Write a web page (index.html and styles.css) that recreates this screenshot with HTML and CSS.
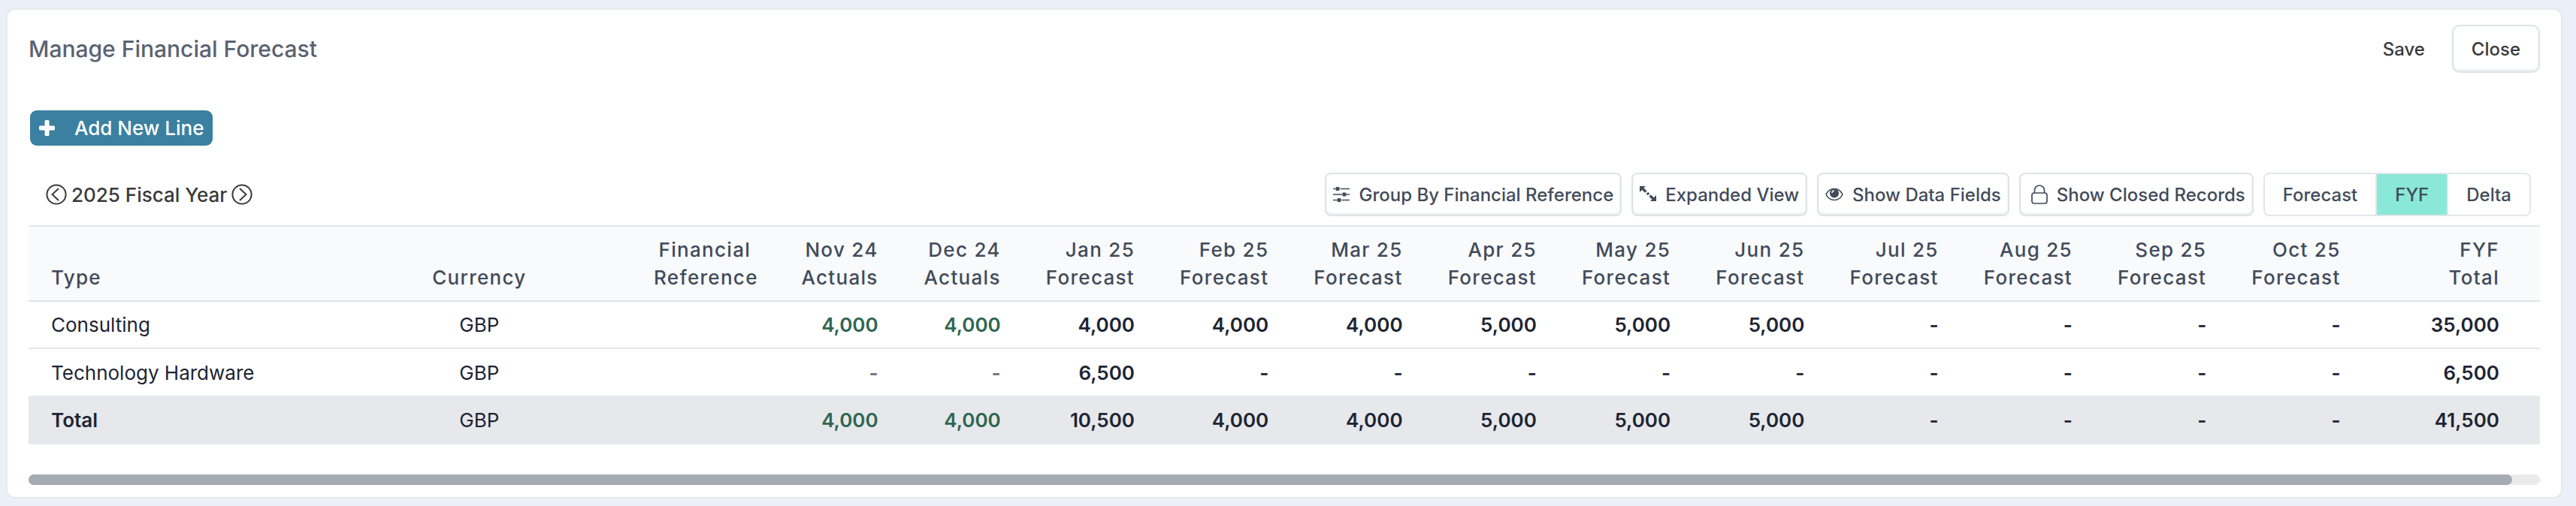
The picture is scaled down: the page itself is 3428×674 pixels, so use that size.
FILE: index.html
```
<!DOCTYPE html>
<html lang="en">

<head>
    <meta charset="UTF-8">
    <meta name="viewport" content="width=device-width, initial-scale=1.0">
    <title>Manage Financial Forecast</title>
    <link rel="stylesheet" href="styles.css">
</head>

<body>
    <main class="card">
        <header class="card-header">
            <h1>Manage Financial Forecast</h1>
            <div class="actions">
                <button type="button" class="save">Save</button>
                <button type="button" class="close">Close</button>
            </div>
        </header>

        <button type="button" class="add">
            <svg width="21" height="22" viewBox="0 0 21 22" fill="#fff">
                <rect x="7.5" y="0" width="6" height="21" rx="1.5" />
                <rect x="0" y="7.5" width="21" height="6" rx="1.5" />
            </svg>
            Add New Line
        </button>

        <div class="toolbar">
            <div class="year">
                <button type="button" class="arrow" aria-label="Previous year">
                    <svg width="28" height="28" viewBox="0 0 28 28">
                        <circle cx="14" cy="14" r="12.6" />
                        <path d="M17 6l-8.500 8 8.500 8" />
                    </svg>
                </button>
                <span>2025 Fiscal Year</span>
                <button type="button" class="arrow" aria-label="Next year">
                    <svg width="28" height="28" viewBox="0 0 28 28">
                        <circle cx="14" cy="14" r="12.6" />
                        <path d="M11 6l8.500 8-8.500 8" />
                    </svg>
                </button>
            </div>
            <div class="options">
                <button type="button" class="tool">
                    <svg width="22" height="20" viewBox="0 0 22 20" fill="#414b5a">
                        <path d="M0 1.700h3v1.600H0zM9.500 1.700H22v1.600H9.500zM0 9.200h12v1.600H0zM18 9.200h4v1.600h-4zM0 16.700h5v1.600H0zM11.500 16.700H22v1.600H11.500z" />
                        <rect x="3.5" y="0" width="5" height="5" rx="1" />
                        <rect x="12.500" y="7.500" width="5" height="5" rx="1" />
                        <rect x="5.500" y="15" width="5" height="5" rx="1" />
                    </svg>
                    Group By Financial Reference
                </button>
                <button type="button" class="tool">
                    <svg width="22" height="24" viewBox="0 0 22 24" fill="#414b5a">
                        <path d="M0 1h8L0 9zM22 21h-8l8-8z" />
                        <path d="M3 3.500l16 15" stroke="#414b5a" stroke-width="3.400" stroke-dasharray="7.500 2 3 2 9" />
                    </svg>
                    Expanded View
                </button>
                <button type="button" class="tool">
                    <svg width="24" height="18" viewBox="0 0 24 18">
                        <path d="M1 9C6-1 18-1 23 9 18 19 6 19 1 9z" fill="none" stroke="#414b5a" stroke-width="1.600" />
                        <circle cx="12" cy="7.500" r="6" fill="#414b5a" />
                        <path d="M9 7a3 3 0 0 1 3-3" fill="none" stroke="#fff" stroke-width="1.500" />
                    </svg>
                    Show Data Fields
                </button>
                <button type="button" class="tool lock">
                    <svg width="22" height="26" viewBox="0 0 22 26" fill="none" stroke="#414b5a" stroke-width="1.700">
                        <rect x="1" y="11" width="20" height="14" rx="3" />
                        <path d="M4.500 11V7.500a6.500 6.500 0 0 1 13 0V11" />
                    </svg>
                    Show Closed Records
                </button>
                <div class="switch">
                    <button type="button">Forecast</button>
                    <button type="button" class="active">FYF</button>
                    <button type="button">Delta</button>
                </div>
            </div>
        </div>

        <table>
            <colgroup>
                <col class="c-type">
                <col class="c-currency">
                <col class="c-reference">
                <col class="c-actual" span="2">
                <col class="c-month" span="10">
                <col>
            </colgroup>
            <thead>
                <tr>
                    <th>Type</th>
                    <th>Currency</th>
                    <th>Financial<br>Reference</th>
                    <th>Nov 24<br>Actuals</th>
                    <th>Dec 24<br>Actuals</th>
                    <th>Jan 25<br>Forecast</th>
                    <th>Feb 25<br>Forecast</th>
                    <th>Mar 25<br>Forecast</th>
                    <th>Apr 25<br>Forecast</th>
                    <th>May 25<br>Forecast</th>
                    <th>Jun 25<br>Forecast</th>
                    <th>Jul 25<br>Forecast</th>
                    <th>Aug 25<br>Forecast</th>
                    <th>Sep 25<br>Forecast</th>
                    <th>Oct 25<br>Forecast</th>
                    <th>FYF<br>Total</th>
                </tr>
            </thead>
            <tbody>
                <tr>
                    <td>Consulting</td>
                    <td>GBP</td>
                    <td></td>
                    <td class="actual">4,000</td>
                    <td class="actual">4,000</td>
                    <td>4,000</td>
                    <td>4,000</td>
                    <td>4,000</td>
                    <td>5,000</td>
                    <td>5,000</td>
                    <td>5,000</td>
                    <td>-</td>
                    <td>-</td>
                    <td>-</td>
                    <td>-</td>
                    <td>35,000</td>
                </tr>
                <tr>
                    <td>Technology Hardware</td>
                    <td>GBP</td>
                    <td></td>
                    <td class="empty">-</td>
                    <td class="empty">-</td>
                    <td>6,500</td>
                    <td>-</td>
                    <td>-</td>
                    <td>-</td>
                    <td>-</td>
                    <td>-</td>
                    <td>-</td>
                    <td>-</td>
                    <td>-</td>
                    <td>-</td>
                    <td>6,500</td>
                </tr>
            </tbody>
            <tfoot>
                <tr>
                    <td>Total</td>
                    <td>GBP</td>
                    <td></td>
                    <td class="actual">4,000</td>
                    <td class="actual">4,000</td>
                    <td>10,500</td>
                    <td>4,000</td>
                    <td>4,000</td>
                    <td>5,000</td>
                    <td>5,000</td>
                    <td>5,000</td>
                    <td>-</td>
                    <td>-</td>
                    <td>-</td>
                    <td>-</td>
                    <td>41,500</td>
                </tr>
            </tfoot>
        </table>

        <div class="scrollbar">
            <div class="thumb"></div>
        </div>
    </main>
</body>

</html>
```
FILE: styles.css
```
* {
    box-sizing: border-box;
}

body {
    margin: 0;
    padding: 11px 18px 10px 8px;
    background-color: #ebf0f8;
    font-family: Inter, "Liberation Sans", sans-serif;
    font-size: 26px;
    color: #1d2533;
}

button {
    padding: 0;
    border: none;
    background: none;
    font-family: inherit;
    font-size: 24px;
    font-weight: 500;
    color: #414b5a;
    cursor: pointer;
}

svg {
    display: block;
    flex: none;
}

.card {
    padding: 20px 28px 16px;
    border: 2px solid #e6e9eb;
    border-radius: 12px;
    background-color: #fff;
}

.card-header {
    display: flex;
    justify-content: space-between;
    align-items: center;
}

h1 {
    margin: 0;
    font-size: 30px;
    font-weight: 500;
    color: #5a6270;
}

.actions {
    display: flex;
    gap: 36px;
}

.actions button {
    color: #3a3a3a;
}

.actions .close {
    height: 64px;
    padding: 0 24px;
    border: 2px solid #dfe3e8;
    border-radius: 10px;
    box-shadow: inset 0 -2px 3px #e9ebee;
}

.add {
    display: flex;
    align-items: center;
    gap: 26px;
    height: 47px;
    margin: 50px 0 0 2px;
    padding: 0 12px;
    border-radius: 9px;
    background-color: #3b80a0;
    font-size: 26px;
    color: #fff;
}

.toolbar {
    display: flex;
    justify-content: space-between;
    align-items: center;
    margin-top: 36px;
    padding: 0 12px 0 23px;
}

.year {
    display: flex;
    align-items: center;
    gap: 6px;
    font-weight: 500;
    color: #3a3a3a;
}

.arrow svg {
    fill: none;
    stroke: #3a3a3a;
    stroke-width: 2;
}

.options {
    display: flex;
    gap: 13px;
}

.tool {
    display: flex;
    align-items: center;
    gap: 12px;
    height: 58px;
    padding: 0 9px;
    border: 2px solid #dfe3e8;
    border-radius: 8px;
    box-shadow: inset 0 -2px 3px #e9ebee;
}

.lock {
    padding-left: 14px;
}

.switch {
    display: flex;
    height: 58px;
    border: 2px solid #e3e6ea;
    border-radius: 8px;
    overflow: hidden;
}

.switch button {
    padding: 0 24px;
}

.switch .active {
    border: solid #e3e6ea;
    border-width: 0 2px;
    background-color: #89e8d7;
}

table {
    width: 100%;
    margin-top: 12px;
    border-collapse: separate;
    border-spacing: 0;
    table-layout: fixed;
}

.c-type {
    width: 11.9%;
}

.c-currency {
    width: 12.1%;
}

.c-reference {
    width: 5.85%;
}

.c-actual {
    width: 4.88%;
}

.c-month {
    width: 5.335%;
}

th,
td {
    padding: 0 30px;
    text-align: right;
    white-space: nowrap;
}

th {
    padding-top: 12px;
    padding-bottom: 12px;
    border-top: 2px solid #e5e7eb;
    border-bottom: 2px solid #dfe3e9;
    background-color: #f9fafc;
    font-weight: 500;
    line-height: 37px;
    letter-spacing: 0.05em;
    vertical-align: bottom;
    color: #414b5a;
}

td {
    height: 63px;
    border-bottom: 2px solid #e5e7eb;
    font-weight: 600;
}

td:nth-child(-n+2) {
    font-weight: 400;
}

th:first-child,
td:first-child {
    text-align: left;
}

th:nth-child(2),
td:nth-child(2),
th:nth-child(3) {
    text-align: center;
}

th:last-child,
td:last-child {
    padding-right: 54px;
}

.actual {
    color: #2f6650;
}

.empty {
    color: #6b7280;
}

tbody tr:last-child td {
    height: 62px;
    border-bottom: none;
}

tfoot td {
    height: 65px;
    border-bottom: none;
    background-color: #e6e8eb;
}

tfoot td:first-child {
    font-weight: 600;
}

.scrollbar {
    height: 14px;
    margin-top: 40px;
    border-radius: 7px;
    background-color: #eaeaea;
}

.thumb {
    width: 98.9%;
    height: 100%;
    border-radius: 7px;
    background-color: #a5abb3;
}
```
